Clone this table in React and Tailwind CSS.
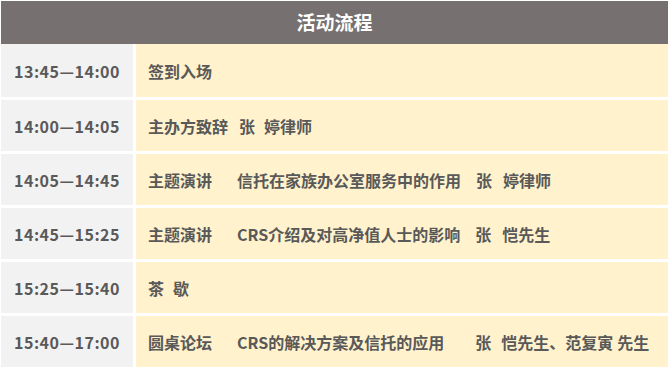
const rows = [
  { time: '13:45—14:00', h: 'h-[53px]', parts: [{ t: '签到入场' }] },
  {
    time: '14:00—14:05',
    parts: [{ t: '主办方致辞' }, { t: '张', ml: 'ml-[11px]' }, { t: '婷律师', ml: 'ml-[9px]' }],
  },
  {
    time: '14:05—14:45',
    parts: [
      { t: '主题演讲' },
      { t: '信托在家族办公室服务中的作用', ml: 'ml-[25px]' },
      { t: '张', ml: 'ml-[15px]' },
      { t: '婷律师', ml: 'ml-[11px]' },
    ],
  },
  {
    time: '14:45—15:25',
    parts: [
      { t: '主题演讲' },
      { t: 'CRS介绍及对高净值人士的影响', ml: 'ml-[25px]' },
      { t: '张', ml: 'ml-[15px]' },
      { t: '恺先生', ml: 'ml-[11px]' },
    ],
  },
  { time: '15:25—15:40', parts: [{ t: '茶' }, { t: '歇', ml: 'ml-[9px]' }] },
  {
    time: '15:40—17:00',
    parts: [
      { t: '圆桌论坛' },
      { t: 'CRS的解决方案及信托的应用', ml: 'ml-[25px]' },
      { t: '张', ml: 'ml-[31px]' },
      { t: '恺先生、范复寅', ml: 'ml-[10px]' },
      { t: '先生', ml: 'ml-[4px]' },
    ],
  },
];

const App = () => {
  return (
    <div
      className="w-[668px] h-[370px] bg-white pt-px pl-px overflow-hidden"
      style={{ fontFamily: '"Noto Sans CJK SC", "Noto Sans", sans-serif' }}
    >
      <div className="h-[43px] bg-[#767170] flex items-center justify-center text-white font-bold text-[19px]">
        活动流程
      </div>
      <div className="flex flex-col gap-[3px]">
        {rows.map((row, i) => (
          <div key={i} className={`flex gap-[3px] ${row.h || 'h-[51px]'}`}>
            <div className="w-[132px] shrink-0 bg-[#f2f2f2] flex items-center justify-center text-[16px] font-bold tracking-[0.5px] text-[#595959]">
              {row.time}
            </div>
            <div className="flex-1 bg-[#fff2cc] flex items-center pl-[12px] text-[16px] font-bold text-[#595959] whitespace-nowrap">
              {row.parts.map((p, j) => (
                <span key={j} className={p.ml || ''}>
                  {p.t}
                </span>
              ))}
            </div>
          </div>
        ))}
      </div>
    </div>
  );
};

export default App;
